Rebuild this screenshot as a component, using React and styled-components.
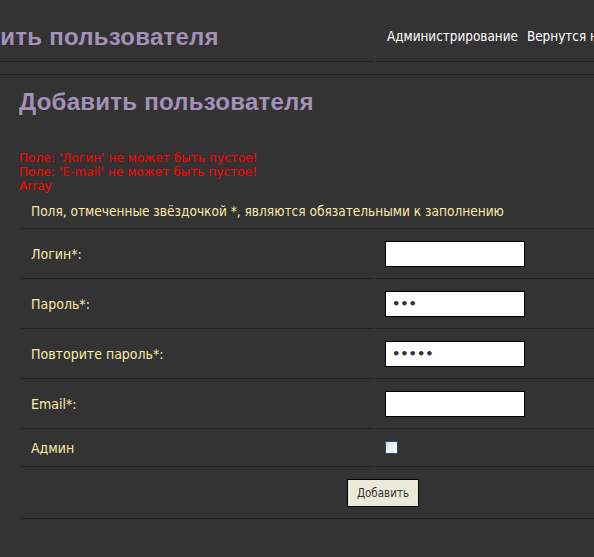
import React from "react";
import styled, { createGlobalStyle } from "styled-components";

const GlobalStyle = createGlobalStyle`
  html, body {
    margin: 0;
    padding: 0;
    background-color: #333333;
    overflow: hidden;
  }
  body {
    font-family: "DejaVu Sans", Verdana, sans-serif;
  }
`;

const Page = styled.div`
  width: 594px;
  overflow: hidden;
`;

const Header = styled.div`
  display: flex;
  gap: 3px;
  margin-left: -95px;
  width: 1000px;
`;

const HeaderCell = styled.div`
  box-sizing: border-box;
  height: 62px;
  padding: 12px 0 0 ${({ pad }) => pad}px;
  width: ${({ w }) => w};
  display: flex;
  align-items: center;
  border-bottom: 1px solid #222222;
`;

const SiteTitle = styled.div`
  font-family: "Liberation Sans", Arial, sans-serif;
  font-weight: bold;
  font-size: 24px;
  line-height: 27px;
  letter-spacing: 0.25px;
  color: #a392b8;
  white-space: nowrap;
`;

const Nav = styled.div`
  display: flex;
  gap: 9px;
  white-space: nowrap;
`;

const NavLink = styled.a`
  font-family: "DejaVu Sans Condensed", "DejaVu Sans", sans-serif;
  font-size: 13.4px;
  color: #ffffff;
  text-decoration: none;
`;

const Divider = styled.div`
  height: 1px;
  margin-top: 12px;
  background-color: #222222;
`;

const Main = styled.div`
  padding-left: 19px;
`;

const PageTitle = styled.h2`
  margin: 13px 0 0;
  font-family: "Liberation Sans", Arial, sans-serif;
  font-weight: bold;
  font-size: 24px;
  line-height: 27px;
  letter-spacing: 0.25px;
  color: #a392b8;
`;

const Errors = styled.div`
  margin-top: 36px;
  font-size: 12px;
  line-height: 14px;
  letter-spacing: 0.1px;
  color: #ff0000;
`;

const FormTable = styled.table`
  margin-top: 2px;
  width: 728px;
  table-layout: fixed;
  border-collapse: separate;
  border-spacing: 2px 0;
`;

const Col = styled.col`
  width: ${({ w }) => w}px;
`;

const Cell = styled.td`
  box-sizing: border-box;
  height: ${({ h }) => h || 50}px;
  padding: 0 10px;
  vertical-align: middle;
  text-align: ${({ center }) => (center ? "center" : "left")};
  border-bottom: 1px solid #222222;
  font-family: "DejaVu Sans Condensed", "DejaVu Sans", sans-serif;
  font-size: 14px;
  color: #ffe9a8;
`;

const NoteCell = styled(Cell)`
  height: auto;
  padding: 8px 10px 9px;
  font-size: 13.55px;
  line-height: 16px;
`;

const TextInput = styled.input`
  box-sizing: border-box;
  display: block;
  width: 140px;
  height: 26px;
  margin: 0;
  padding: 0 6px;
  border: 1px solid #000000;
  background: #ffffff;
  font-family: "DejaVu Sans", Verdana, sans-serif;
  font-weight: bold;
  font-size: 13px;
  color: #333333;
  outline: none;
`;

const CheckBox = styled.input`
  appearance: none;
  display: block;
  box-sizing: border-box;
  width: 13px;
  height: 13px;
  margin: 0;
  border: 1px solid #1c5180;
  background: linear-gradient(135deg, #dcdcd7 0%, #ffffff 90%);
`;

const SubmitButton = styled.button`
  box-sizing: border-box;
  width: 72px;
  height: 28px;
  margin: 0;
  padding: 0;
  border: 1px solid #000000;
  background-color: #ece9d8;
  font-family: "DejaVu Sans Condensed", "DejaVu Sans", sans-serif;
  font-size: 11.5px;
  color: #333333;
`;

const fields = [
  { label: "Логин*:", type: "text", value: "" },
  { label: "Пароль*:", type: "password", value: "123" },
  { label: "Повторите пароль*:", type: "password", value: "12345" },
  { label: "Email*:", type: "text", value: "" },
];

const App = () => {
  return (
    <Page>
      <GlobalStyle />
      <Header>
        <HeaderCell w="469px" pad={19}>
          <SiteTitle>Добавить пользователя</SiteTitle>
        </HeaderCell>
        <HeaderCell w="520px" pad={10}>
          <Nav>
            <NavLink href="#">Администрирование</NavLink>
            <NavLink href="#">Вернутся на сайт</NavLink>
          </Nav>
        </HeaderCell>
      </Header>
      <Divider />
      <Main>
        <PageTitle>Добавить пользователя</PageTitle>
        <Errors>
          Поле: 'Логин' не может быть пустое!
          <br />
          Поле: 'E-mail' не может быть пустое!
          <br />
          Array
        </Errors>
        <FormTable>
          <colgroup>
            <Col w={352} />
            <Col w={370} />
          </colgroup>
          <tbody>
            <tr>
              <NoteCell colSpan={2}>
                Поля, отмеченные звёздочкой *, являются обязательными к заполнению
              </NoteCell>
            </tr>
            {fields.map((f) => (
              <tr key={f.label}>
                <Cell>{f.label}</Cell>
                <Cell>
                  <TextInput type={f.type} defaultValue={f.value} />
                </Cell>
              </tr>
            ))}
            <tr>
              <Cell h={38}>Админ</Cell>
              <Cell h={38}>
                <CheckBox type="checkbox" />
              </Cell>
            </tr>
            <tr>
              <Cell h={52} colSpan={2} center>
                <SubmitButton type="submit">Добавить</SubmitButton>
              </Cell>
            </tr>
          </tbody>
        </FormTable>
      </Main>
    </Page>
  );
};

export default App;
